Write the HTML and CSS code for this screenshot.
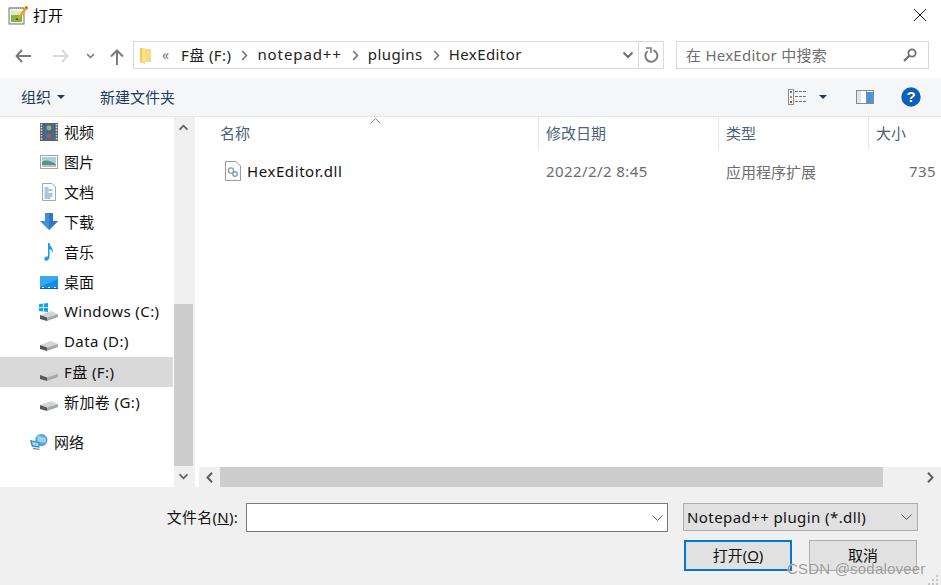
FILE: index.html
```html
<!DOCTYPE html>
<html lang="zh-CN">
  <head>
    <meta charset="UTF-8" />
    <title>打开</title>
    <link rel="stylesheet" href="styles.css">
  </head>
  <body>
    <svg class="defs" width="0" height="0">
      <symbol id="drive" viewBox="0 0 18 10">
        <path d="M0 4 L11 0 L18 3 L7 6.500 Z" fill="#d3d5d4"/>
        <path d="M0 4 L7 6.500 V10 L0 8 Z" fill="#55585a"/>
        <path d="M7 6.500 L18 3 V6 L7 10 Z" fill="#a6a9a8"/>
        <path d="M13 6.800 L16.500 5.700" stroke="#7fc06f" stroke-width="1"/>
      </symbol>
      <symbol id="chev-down" viewBox="0 0 12 8">
        <path d="M1.500 1.500 L6 6 L10.500 1.500" fill="none" stroke="currentColor" stroke-width="2"/>
      </symbol>
      <symbol id="chev-right" viewBox="0 0 7 11">
        <path d="M1.200 1 L5.400 5.500 L1.200 10" fill="none" stroke="currentColor" stroke-width="1.700"/>
      </symbol>
    </svg>

    <div class="dialog">
      <header class="titlebar">
        <svg class="app-icon" width="20" height="20" viewBox="0 0 20 20">
          <rect x="1" y="3" width="15" height="16" fill="#f4f4ea" stroke="#777"/>
          <path d="M2 3h13" stroke="#999" stroke-dasharray="1 1" stroke-width="2"/>
          <rect x="3" y="9" width="11" height="8" fill="#7cb842"/>
          <rect x="3" y="6" width="11" height="4" fill="#dfe8c8"/>
          <path d="M9 13 L18 1 L20 3 L11 14 L8 15 Z" fill="#e8a21c"/>
          <path d="M17 2 L18 1 L20 3 L19 4 Z" fill="#c5342a"/>
          <path d="M9 13 L8 15 L10.500 14.400 Z" fill="#222"/>
        </svg>
        <span class="title">打开</span>
        <svg class="close" width="12" height="12" viewBox="0 0 12 12">
          <path d="M0 0 L12 12 M12 0 L0 12" stroke="#111" stroke-width="1"/>
        </svg>
      </header>

      <nav class="navbar">
        <svg class="nav-btn back" width="16" height="14" viewBox="0 0 16 14"><path d="M7 1 L1.500 7 L7 13 M2 7 H16" fill="none" stroke="#7a7a7a" stroke-width="2"/></svg>
        <svg class="nav-btn forward" width="16" height="14" viewBox="0 0 16 14"><path d="M9 1 L14.500 7 L9 13 M0 7 H14" fill="none" stroke="#d9d9d9" stroke-width="2"/></svg>
        <svg class="nav-btn recent" width="9" height="6"><use href="#chev-down" color="#7a7a7a"/></svg>
        <svg class="nav-btn up" width="14" height="16" viewBox="0 0 14 16"><path d="M1 7.500 L7 1.500 L13 7.500 M7 2 V16" fill="none" stroke="#7a7a7a" stroke-width="2"/></svg>

        <div class="address">
          <svg class="folder" width="13" height="17" viewBox="0 0 13 17">
            <path d="M1 1 H6 V17 L1 15 Z" fill="#f3c95c"/>
            <path d="M6 2 H12 V15 H6 Z" fill="#f9dc82"/>
            <path d="M3 1 H6 V16 L3 15 Z" fill="#fbe08e"/>
          </svg>
          <span class="crumb-more">«</span>
          <span class="crumb">F盘 (F:)</span>
          <svg class="crumb-sep" width="7" height="11"><use href="#chev-right" color="#777"/></svg>
          <span class="crumb crumb-wide">notepad++</span>
          <svg class="crumb-sep" width="7" height="11"><use href="#chev-right" color="#777"/></svg>
          <span class="crumb">plugins</span>
          <svg class="crumb-sep" width="7" height="11"><use href="#chev-right" color="#777"/></svg>
          <span class="crumb">HexEditor</span>
          <svg class="address-drop" width="12" height="8"><use href="#chev-down" color="#6d6d6d"/></svg>
          <div class="refresh">
            <svg width="15" height="16" viewBox="0 0 15 16"><path d="M9.500 3.200 A6 6 0 1 1 3.500 4.200" fill="none" stroke="#7d7d7d" stroke-width="2"/><path d="M2 1 L7 1 L7 6" fill="none" stroke="#7d7d7d" stroke-width="1.600"/></svg>
          </div>
        </div>

        <div class="search">
          <span class="search-text">在 HexEditor 中搜索</span>
          <svg width="14" height="14" viewBox="0 0 14 14"><circle cx="9" cy="5" r="3.600" fill="none" stroke="#6f6f6f" stroke-width="1.800"/><path d="M6.400 7.600 L1 13" stroke="#6f6f6f" stroke-width="2.200"/></svg>
        </div>
      </nav>

      <div class="toolbar">
        <span class="tool organize">组织</span>
        <span class="caret"></span>
        <span class="tool new-folder">新建文件夹</span>
        <div class="tool-right">
          <svg class="view-icon" width="18" height="16" viewBox="0 0 18 16">
            <rect x=".5" y=".5" width="5" height="15" fill="#f7f7f7" stroke="#8c8c8c"/>
            <rect x="2" y="2" width="2" height="2" fill="#3f7fb5"/>
            <rect x="2" y="7" width="2" height="2" fill="#a69a3a"/>
            <rect x="2" y="12" width="2" height="2" fill="#b5402f"/>
            <path d="M7 2.500h3m1 0h3m1 0h3M7 7.500h3m1 0h3m1 0h3M7 12.500h3m1 0h3m1 0h3" stroke="#777" stroke-width="1"/>
          </svg>
          <span class="caret view-caret"></span>
          <svg class="pane-icon" width="18" height="14" viewBox="0 0 18 14">
            <rect x=".5" y=".5" width="17" height="13" fill="#fff" stroke="#8a8a8a"/>
            <rect x="1" y="1" width="4" height="12" fill="#e4e4e4"/>
            <rect x="11" y="2" width="6" height="11" fill="#3f97e6"/>
            <path d="M10.500 1v12" stroke="#8a8a8a"/>
          </svg>
          <svg class="help-icon" width="20" height="20" viewBox="0 0 20 20">
            <circle cx="10" cy="10" r="9.700" fill="#0c60b8"/>
            <text x="10" y="15" text-anchor="middle" class="help-mark">?</text>
          </svg>
        </div>
      </div>

      <main class="main">
        <aside class="sidebar">
          <div class="side-item">
            <svg class="side-icon" width="18" height="18" viewBox="0 0 18 18">
              <rect width="18" height="18" fill="#5b5f60"/>
              <path d="M1.500 1v16M16.500 1v16" stroke="#e6e6e6" stroke-width="1.600" stroke-dasharray="1.400 1.400"/>
              <rect x="4" y="1" width="10" height="7.500" fill="#2f6fb0"/>
              <rect x="4" y="9.500" width="10" height="7.500" fill="#2f6fb0"/>
              <circle cx="9" cy="5" r="2.400" fill="#d8a030"/>
              <circle cx="9" cy="13.500" r="2.400" fill="#c9502f"/>
            </svg>
            <span>视频</span>
          </div>
          <div class="side-item">
            <svg class="side-icon" width="18" height="14" viewBox="0 0 18 14">
              <rect x=".5" y=".5" width="17" height="13" fill="#fff" stroke="#a3a3a3"/>
              <rect x="2" y="2" width="14" height="6" fill="#a9cfe6"/>
              <path d="M2 7 C6 4 10 6 16 9 V12 H2 Z" fill="#5f9184"/>
              <rect x="2" y="10" width="14" height="2" fill="#b8c4b4"/>
            </svg>
            <span>图片</span>
          </div>
          <div class="side-item">
            <svg class="side-icon" width="18" height="18" viewBox="0 0 18 18">
              <path d="M2.500.5 H12 L15.500 4 V17.500 H2.500 Z" fill="#fbfbfb" stroke="#a8a8a8"/>
              <path d="M4.500 5h4M4.500 7h8M4.500 9h4M4.500 11h8M4.500 13h8M4.500 15h6" stroke="#5d93bd"/>
            </svg>
            <span>文档</span>
          </div>
          <div class="side-item">
            <svg class="side-icon" width="18" height="18" viewBox="0 0 18 18">
              <path d="M5 0 H13 V8 H18 L9 17 L0 8 H5 Z" fill="#3f8fdc"/>
              <path d="M9 0 H13 V8 H18 L9 17 Z" fill="#2f78c4"/>
            </svg>
            <span>下载</span>
          </div>
          <div class="side-item">
            <svg class="side-icon" width="18" height="18" viewBox="0 0 18 18">
              <path d="M8 0 H9.500 C10 4 14 5 12.500 10 C12 7.500 11 6.500 9.500 6 V14 C9.500 16.500 7.500 18 5.800 17.800 C3.800 17.500 3.800 15 5.500 14 C6.300 13.500 7.300 13.400 8 13.700 Z" fill="#1c9be8"/>
            </svg>
            <span>音乐</span>
          </div>
          <div class="side-item">
            <svg class="side-icon" width="18" height="13" viewBox="0 0 18 13">
              <rect width="18" height="13" fill="#0f8fe8"/>
              <path d="M0 11 L18 3 V0 H0 Z" fill="#35a9f2"/>
              <rect y="12" width="18" height="1" fill="#0b5fa8"/>
              <path d="M2 11.500h2M8 11.500h2M14 11.500h2" stroke="#dff2ff"/>
            </svg>
            <span>桌面</span>
          </div>
          <div class="side-item">
            <span class="drive-wrap">
              <svg width="18" height="10" class="drive-svg"><use href="#drive"/></svg>
              <svg class="win-flag" width="9" height="9" viewBox="0 0 8 8"><path d="M0 1 L3.500 .5 V3.500 H0 Z M4.300 .4 L8 0 V3.500 H4.300 Z M0 4.300 H3.500 V7.500 L0 7 Z M4.300 4.300 H8 V8 L4.300 7.600 Z" fill="#10a8e8"/></svg>
            </span>
            <span class="latin">Windows (C:)</span>
          </div>
          <div class="side-item">
            <span class="drive-wrap"><svg width="18" height="10" class="drive-svg"><use href="#drive"/></svg></span>
            <span class="latin">Data (D:)</span>
          </div>
          <div class="side-item selected">
            <span class="drive-wrap"><svg width="18" height="10" class="drive-svg"><use href="#drive"/></svg></span>
            <span class="latin">F盘 (F:)</span>
          </div>
          <div class="side-item">
            <span class="drive-wrap"><svg width="18" height="10" class="drive-svg"><use href="#drive"/></svg></span>
            <span class="latin">新加卷 (G:)</span>
          </div>
          <div class="side-item network">
            <svg class="side-icon" width="19" height="18" viewBox="0 0 19 18">
              <circle cx="12" cy="7" r="6.500" fill="#5ba6d8"/>
              <path d="M8 3 C11 2 13 5 16 4 L17 9 C14 11 11 8 8 10 Z" fill="#9fd0ea"/>
              <path d="M0 7 L10 9 V15 L2 14 Z" fill="#2f86c8"/>
              <path d="M2 8.500 L9 10 V13.500 L3 12.800 Z" fill="#9ed3f2"/>
              <path d="M3 15 L10 16 V17.500 L3 16.500 Z" fill="#7b8790"/>
            </svg>
            <span>网络</span>
          </div>
        </aside>

        <div class="vscroll">
          <div class="arrow-btn"><svg width="11" height="7" class="flip"><use href="#chev-down" color="#606060"/></svg></div>
          <div class="vtrack"><div class="vthumb"></div></div>
          <div class="arrow-btn"><svg width="11" height="7"><use href="#chev-down" color="#606060"/></svg></div>
        </div>

        <section class="files">
          <div class="col-head">
            <svg class="sort-mark" width="11" height="6" viewBox="0 0 11 6"><path d="M.5 5.500 L5.500 .5 L10.500 5.500" fill="none" stroke="#8d8d8d"/></svg>
            <span class="col col-name">名称</span>
            <span class="col col-date">修改日期</span>
            <span class="col col-type">类型</span>
            <span class="col col-size">大小</span>
          </div>
          <div class="file-row">
            <span class="col-name file-name">
              <svg width="16" height="20" viewBox="0 0 16 20">
                <path d="M.5 .5 H11 L15.500 5 V19.500 H.5 Z" fill="#fdfdfd" stroke="#9a9a9a"/>
                <circle cx="6" cy="9.500" r="2.600" fill="none" stroke="#9a9a9a" stroke-width="1.400"/>
                <circle cx="10" cy="13" r="2.200" fill="none" stroke="#6ea6cf" stroke-width="1.400"/>
              </svg>
              <span class="file-label">HexEditor.dll</span>
            </span>
            <span class="col-date muted latin">2022/2/2 8:45</span>
            <span class="col-type muted">应用程序扩展</span>
            <span class="col-size muted size-val latin">735</span>
          </div>
          <div class="hscroll">
            <div class="arrow-btn"><svg width="7" height="11" viewBox="0 0 7 11"><path d="M6 .8 L1.500 5.500 L6 10.200" fill="none" stroke="#606060" stroke-width="2"/></svg></div>
            <div class="hthumb"></div>
            <div class="htrack"></div>
            <div class="arrow-btn"><svg width="7" height="11" viewBox="0 0 7 11"><path d="M1 .8 L5.500 5.500 L1 10.200" fill="none" stroke="#606060" stroke-width="2"/></svg></div>
          </div>
        </section>
      </main>

      <footer class="footer">
        <div class="footer-row">
          <label class="name-label">文件名(<u>N</u>):</label>
          <div class="name-input">
            <svg width="11" height="6" viewBox="0 0 11 6"><path d="M.5 .5 L5.500 5.500 L10.500 .5" fill="none" stroke="#555"/></svg>
          </div>
          <div class="type-select">
            <span class="latin">Notepad++ plugin (*.dll)</span>
            <svg width="11" height="6" viewBox="0 0 11 6"><path d="M.5 .5 L5.500 5.500 L10.500 .5" fill="none" stroke="#555"/></svg>
          </div>
        </div>
        <div class="footer-buttons">
          <button class="btn primary" type="button">打开(<u>O</u>)</button>
          <button class="btn" type="button">取消</button>
        </div>
      </footer>

      <svg class="grip" width="11" height="11" viewBox="0 0 11 11">
        <path d="M8 1h2v2H8zM4 5h2v2H4zM8 5h2v2H8zM0 9h2v2H0zM4 9h2v2H4zM8 9h2v2H8z" fill="#c4c4c4"/>
      </svg>
      <span class="watermark">CSDN @sodaloveer</span>
    </div>
  </body>
</html>
```

FILE: styles.css
```css
* {
  box-sizing: border-box;
}
html,
body {
  margin: 0;
  overflow: hidden;
}
body {
  font-family: "Noto Sans", "Noto Sans CJK SC", sans-serif;
  font-size: 15px;
  color: #111;
  background: #fff;
}
.defs {
  position: absolute;
}
svg {
  display: block;
  flex: none;
}
.latin {
  letter-spacing: .42px;
}
.dialog {
  position: relative;
  width: 941px;
  height: 585px;
  display: flex;
  flex-direction: column;
}

/* title bar */
.titlebar {
  height: 36px;
  flex: none;
  display: flex;
  align-items: flex-start;
  padding: 5px 15px 0 8px;
}
.title {
  margin-left: 5px;
  line-height: 20px;
  color: #000;
}
.close {
  margin: 4px 0 0 auto;
}

/* back / forward / address / search */
.navbar {
  height: 42px;
  flex: none;
  display: flex;
  align-items: center;
  padding: 0 12px 4px 15px;
}
.nav-btn.back {
  margin-top: 2px;
}
.nav-btn.forward {
  margin: 2px 0 0 22px;
}
.nav-btn.recent {
  margin: 2px 0 0 17px;
}
.nav-btn.up {
  margin: 4px 0 0 15px;
}
.address {
  width: 531px;
  height: 28px;
  margin-left: 9px;
  border: 1px solid #d9d9d9;
  display: flex;
  align-items: center;
  padding-left: 5px;
}
.folder {
  margin-right: 10px;
}
.crumb-more {
  width: 19px;
  color: #777;
  font-size: 14px;
  padding-bottom: 2px;
}
.crumb {
  color: #222;
  white-space: nowrap;
  letter-spacing: .42px;
  padding-bottom: 2px;
}
.crumb-wide {
  letter-spacing: .9px;
}
.crumb-sep {
  margin: 0 9px 0 10px;
}
.address-drop {
  margin-left: auto;
}
.refresh {
  width: 25px;
  height: 26px;
  margin-left: 4px;
  border-left: 1px solid #d9d9d9;
  display: flex;
  align-items: center;
  justify-content: center;
}
.search {
  width: 253px;
  height: 28px;
  margin-left: 12px;
  border: 1px solid #d9d9d9;
  display: flex;
  align-items: center;
  justify-content: space-between;
  padding: 0 11px 0 9px;
}
.search-text {
  color: #6d6d6d;
  letter-spacing: .25px;
  padding-bottom: 2px;
}

/* command bar */
.toolbar {
  height: 39px;
  flex: none;
  background: #f5f6f7;
  border-bottom: 1px solid #e5e5e5;
  display: flex;
  align-items: center;
  padding-left: 21px;
}
.tool {
  color: #1e3a5f;
  padding-bottom: 2px;
}
.caret {
  width: 0;
  height: 0;
  margin-left: 6px;
  border: 4px solid transparent;
  border-top: 4px solid #1e3a5f;
  border-bottom: 0;
}
.new-folder {
  margin-left: 35px;
}
.tool-right {
  margin-left: auto;
  display: flex;
  align-items: center;
  padding-right: 20px;
}
.view-caret {
  margin-left: 13px;
}
.pane-icon {
  margin-left: 29px;
}
.help-icon {
  margin-left: 27px;
}
.help-mark {
  fill: #fff;
  font: bold 15px "Liberation Sans", sans-serif;
}

/* navigation tree, scrollbar and file list */
.main {
  height: 370px;
  flex: none;
  display: flex;
}
.sidebar {
  width: 174px;
  flex: none;
  padding-right: 1px;
}
.side-item {
  height: 30px;
  display: flex;
  align-items: center;
  padding-left: 40px;
  white-space: nowrap;
}
.side-item > span:last-child {
  margin-left: 6px;
  padding-bottom: 2px;
}
.side-icon {
  width: 18px;
}
.side-item.selected {
  background: #d9d9d9;
}
.side-item.network {
  margin-top: 10px;
  padding-left: 30px;
}
.drive-wrap {
  position: relative;
  width: 18px;
  height: 18px;
  display: block;
}
.drive-svg {
  position: absolute;
  left: 0;
  top: 8px;
}
.win-flag {
  position: absolute;
  left: -1px;
  top: 0;
}
.vscroll {
  width: 20px;
  flex: none;
  background: #f0f0f0;
  display: flex;
  flex-direction: column;
  padding-right: 1px;
}
.vtrack {
  flex: 1;
  padding-top: 167px;
}
.vthumb {
  height: 162px;
  background: #cdcdcd;
}
.arrow-btn {
  height: 20px;
  width: 19px;
  flex: none;
  display: flex;
  align-items: center;
  justify-content: center;
}
.vscroll .arrow-btn:last-child {
  height: 21px;
}
.flip {
  transform: scaleY(-1);
}
.files {
  flex: 1;
  min-width: 0;
  position: relative;
  display: flex;
  flex-direction: column;
  padding-left: 4px;
  border-left: 1px solid #f0f0f0;
  overflow: hidden;
}
.col-head,
.file-row {
  display: grid;
  grid-template-columns: 341px 180px 150px 80px;
  margin-left: -1px;
}
.col-head {
  height: 33px;
  align-items: center;
  position: relative;
  color: #4c607a;
}
.col {
  height: 100%;
  display: flex;
  align-items: center;
  padding: 0 0 2px 7px;
  border-right: 1px solid #e5e5e5;
}
.col-name.col {
  padding-left: 22px;
}
.col-size.col {
  border-right: 0;
}
.sort-mark {
  position: absolute;
  left: 172px;
  top: 1px;
}
.file-row {
  height: 42px;
  flex: none;
  align-items: center;
}
.file-row > span {
  white-space: nowrap;
}
.file-name {
  display: flex;
  align-items: center;
  gap: 6px;
  padding-left: 27px;
}
.file-label {
  letter-spacing: .58px;
}
.file-row .col-date,
.file-row .col-type {
  padding-left: 7px;
}
.muted {
  color: #6d6d6d;
}
.size-val {
  padding-left: 40px;
}
.hscroll {
  margin-top: auto;
  height: 20px;
  flex: none;
  display: flex;
  background: #f0f0f0;
}
.hscroll .arrow-btn {
  width: 21px;
}
.hthumb {
  width: 663px;
  background: #cdcdcd;
}
.htrack {
  flex: 1;
}

/* file name row and buttons */
.footer {
  flex: 1;
  background: #f0f0f0;
  padding: 16px 23px 0 0;
}
.footer-row {
  display: flex;
  align-items: flex-start;
}
.name-label {
  width: 246px;
  height: 29px;
  padding-right: 8px;
  text-align: right;
  line-height: 28px;
  letter-spacing: .25px;
}
.name-input {
  width: 422px;
  height: 29px;
  background: #fff;
  border: 1px solid #7a7a7a;
  display: flex;
  align-items: center;
  justify-content: flex-end;
  padding-right: 4px;
}
.type-select {
  width: 235px;
  height: 28px;
  margin-left: 15px;
  background: #e1e1e1;
  border: 1px solid #adadad;
  display: flex;
  align-items: center;
  justify-content: space-between;
  padding: 0 5px 0 3px;
}
.footer-buttons {
  display: flex;
  justify-content: flex-end;
  gap: 17px;
  margin-top: 8px;
  padding-right: 1px;
}
.btn {
  width: 108px;
  height: 31px;
  padding: 0 0 2px;
  background: #e1e1e1;
  border: 1px solid #adadad;
  font-family: inherit;
  font-size: 15px;
  color: #111;
}
.btn.primary {
  border: 2px solid #0078d7;
}

/* resize grip and site stamp in the corner */
.grip {
  position: absolute;
  right: 2px;
  bottom: 0;
}
.watermark {
  position: absolute;
  left: 787px;
  top: 560px;
  font-family: "Liberation Sans", sans-serif;
  font-size: 15px;
  letter-spacing: .2px;
  color: rgba(120, 120, 120, .75);
  text-shadow: 0 0 1px #fff;
}
```
